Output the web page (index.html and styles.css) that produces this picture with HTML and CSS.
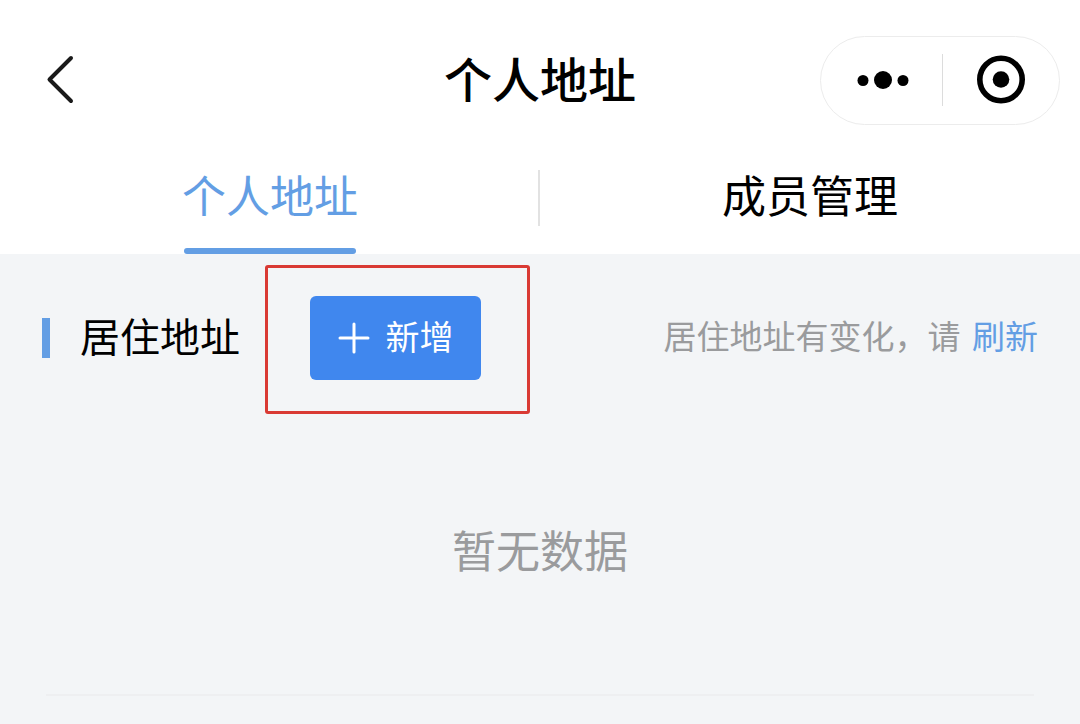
FILE: index.html
```html
<!DOCTYPE html>
<html lang="zh-CN">
<head>
    <meta charset="UTF-8">
    <meta name="viewport" content="width=device-width, initial-scale=1.0">
    <title>个人地址</title>
    <link rel="stylesheet" href="styles.css">
</head>
<body>
    <header class="navbar">
        <button type="button" class="back-btn" aria-label="返回">
            <svg width="32" height="52" viewBox="0 0 32 52" fill="none" stroke="#1a1a1a" stroke-width="4" stroke-linecap="round" stroke-linejoin="round">
                <path d="M27 4L5.500 25.500l21.500 21.500"/>
            </svg>
        </button>
        <h1 class="navbar-title">个人地址</h1>
        <div class="capsule">
            <button type="button" class="capsule-btn" aria-label="更多">
                <svg width="56" height="20" viewBox="0 0 56 20" fill="#000">
                    <circle cx="8" cy="10.500" r="5.500"/>
                    <circle cx="28" cy="10" r="9"/>
                    <circle cx="48" cy="10.500" r="5.500"/>
                </svg>
            </button>
            <button type="button" class="capsule-btn" aria-label="关闭">
                <svg width="50" height="50" viewBox="0 0 50 50">
                    <circle cx="25" cy="24.500" r="21.200" fill="none" stroke="#000" stroke-width="5.600"/>
                    <circle cx="25" cy="24.500" r="8.300" fill="#000"/>
                </svg>
            </button>
        </div>
    </header>

    <nav class="tabs">
        <a href="#address" class="tab active">个人地址</a>
        <a href="#members" class="tab">成员管理</a>
    </nav>

    <main class="content" id="address">
        <div class="section-head">
            <h2 class="section-title">居住地址</h2>
            <div class="add-wrap">
                <button type="button" class="add-btn">
                    <svg width="32" height="32" viewBox="0 0 32 32" stroke="#fff" stroke-width="3" stroke-linecap="round">
                        <path d="M16 2v28M2 16h28"/>
                    </svg>
                    <span>新增</span>
                </button>
            </div>
            <p class="hint">居住地址有变化，请 <a href="#refresh">刷新</a></p>
        </div>
        <p class="empty">暂无数据</p>
        <hr class="line">
    </main>
</body>
</html>
```

FILE: styles.css
```css
* {
    box-sizing: border-box;
}

body {
    margin: 0;
    min-height: 100vh;
    background-color: #f3f5f7;
    color: #000;
    font-family: "Noto Sans CJK SC", sans-serif;
}

h1, h2, p {
    margin: 0;
    font-weight: 400;
}

button {
    padding: 0;
    border: none;
    background: none;
    font-family: inherit;
    cursor: pointer;
}

a {
    color: #639ee4;
    text-decoration: none;
}

svg {
    display: block;
}

.navbar {
    display: grid;
    grid-template-columns: 1fr auto 1fr;
    align-items: center;
    height: 160px;
    padding: 0 20px;
    background-color: #fff;
}

.back-btn {
    justify-self: start;
    padding-left: 24px;
}

.navbar-title {
    padding-bottom: 6px;
    font-size: 48px;
    line-height: 64px;
    font-weight: 500;
}

.capsule {
    display: flex;
    justify-self: end;
    align-items: center;
    width: 240px;
    height: 89px;
    border: 1px solid #ececec;
    border-radius: 45px;
}

.capsule-btn {
    display: flex;
    flex: 1;
    align-items: center;
    justify-content: center;
    height: 52px;
    padding-left: 4px;
}

.capsule-btn + .capsule-btn {
    padding-left: 0;
    border-left: 1px solid #dcdcdc;
}

.tabs {
    display: flex;
    position: relative;
    background-color: #fff;
}

/* divider between the two tabs */
.tabs::after {
    content: "";
    position: absolute;
    top: 10px;
    left: 50%;
    width: 2px;
    height: 56px;
    margin-left: -2px;
    background-color: #e2e2e2;
}

.tab {
    display: flex;
    flex: 1;
    flex-direction: column;
    align-items: center;
    height: 94px;
    color: #000;
    font-size: 44px;
    line-height: 68px;
}

.tab.active {
    color: #639ee4;
}

.tab.active::after {
    content: "";
    width: 172px;
    height: 6px;
    margin-top: 20px;
    border-radius: 3px;
    background-color: #639ee4;
}

.section-head {
    display: flex;
    align-items: center;
    padding: 42px 42px 0;
}

.section-head::before {
    content: "";
    width: 8px;
    height: 40px;
    background-color: #639ee4;
}

.section-title {
    padding: 0 0 6px 30px;
    font-size: 40px;
    line-height: 60px;
}

.add-wrap {
    position: relative;
    margin-left: 70px;
}

/* red frame around the add button */
.add-wrap::after {
    content: "";
    position: absolute;
    inset: -31px -49px -34px -45px;
    border: 3px solid #d93a34;
    border-radius: 3px;
    pointer-events: none;
}

.add-btn {
    display: flex;
    align-items: center;
    justify-content: center;
    gap: 16px;
    width: 171px;
    height: 84px;
    border-radius: 6px;
    background-color: #4087ee;
    color: #fff;
    font-size: 34px;
}

.add-btn span {
    padding-bottom: 6px;
}

.hint {
    margin-left: auto;
    padding-bottom: 6px;
    color: #9a9b9d;
    font-size: 33px;
    line-height: 48px;
}

.hint a {
    margin-left: 4px;
}

.empty {
    padding: 136px 0 112px;
    color: #9a9b9d;
    font-size: 44px;
    line-height: 66px;
    text-align: center;
}

.line {
    height: 2px;
    margin: 0 46px;
    border: none;
    background-color: #eeeff1;
}
```
